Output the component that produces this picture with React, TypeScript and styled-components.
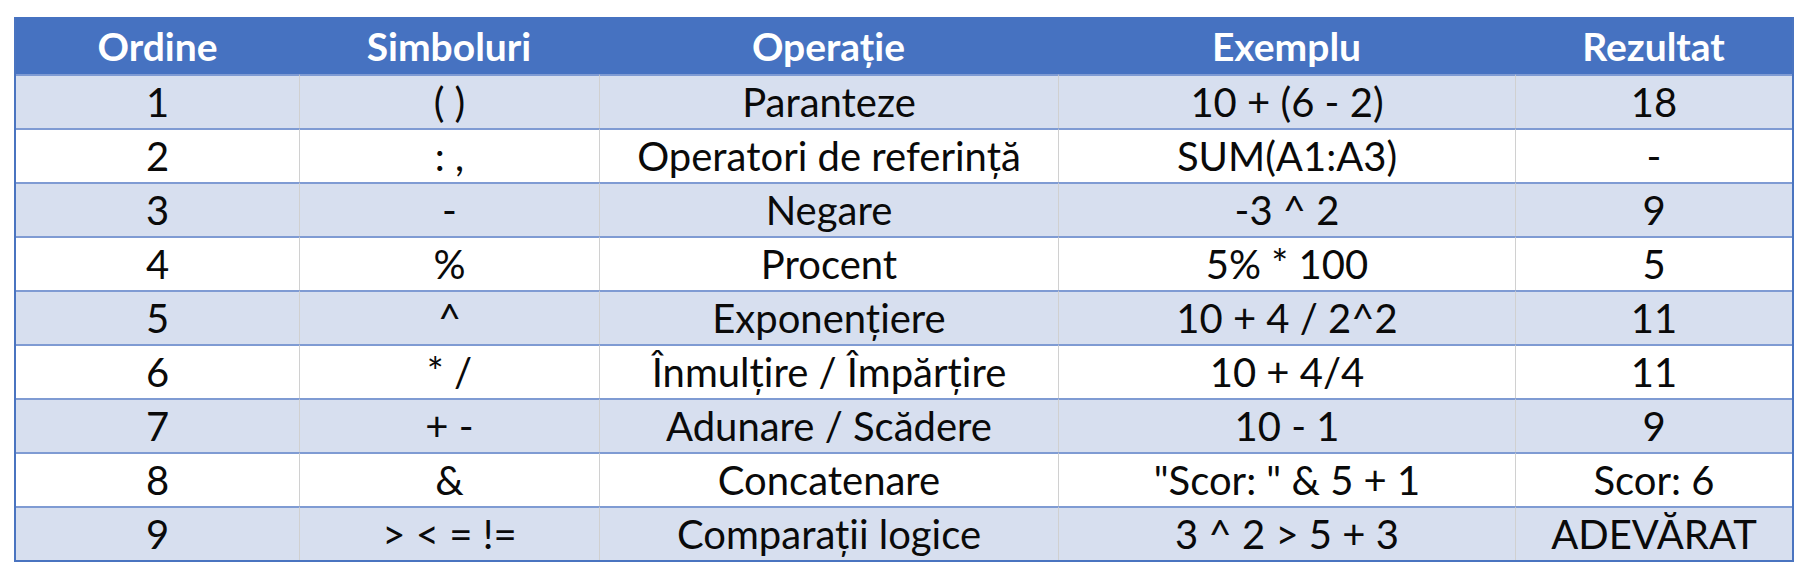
import React from "react";
import styled, { createGlobalStyle } from "styled-components";

const GlobalStyle = createGlobalStyle`
  html, body {
    margin: 0;
    padding: 0;
    background: #ffffff;
  }
  body {
    font-family: "Lato", "Open Sans", "Liberation Sans", sans-serif;
  }
`;

const Page = styled.div`
  padding: 17px 0 0 14px;
`;

const Table = styled.table`
  width: 1776px;
  border-collapse: separate;
  border-spacing: 0;
  table-layout: fixed;
  border-left: 2px solid #4a74c0;
  border-right: 2px solid #4a74c0;
  border-bottom: 2px solid #4a74c0;
`;

const HeadCell = styled.th`
  height: 57px;
  padding: 0;
  background: #4672c1;
  color: #ffffff;
  font-size: 39px;
  font-weight: 700;
  text-align: center;
  vertical-align: middle;
  white-space: nowrap;
`;

const Row = styled.tr<{ $shaded: boolean }>`
  background: ${(p) => (p.$shaded ? "#d7dfef" : "#ffffff")};
`;

const Cell = styled.td<{ $shaded: boolean }>`
  height: 52px;
  padding: 0;
  color: #0a0a0a;
  font-size: 40px;
  text-align: center;
  vertical-align: middle;
  white-space: nowrap;
  border-top: 2px solid #7f9bd3;
  & + & {
    border-left: 1px solid ${(p) => (p.$shaded ? "transparent" : "#d0d0d0")};
  }
`;

const columns = [
  { title: "Ordine", width: 283 },
  { title: "Simboluri", width: 300 },
  { title: "Operație", width: 459 },
  { title: "Exemplu", width: 457 },
  { title: "Rezultat", width: 277 },
];

const rows = [
  ["1", "( )", "Paranteze", "10 + (6 - 2)", "18"],
  ["2", ": ,", "Operatori de referință", "SUM(A1:A3)", "-"],
  ["3", "-", "Negare", "-3 ^ 2", "9"],
  ["4", "%", "Procent", "5% * 100", "5"],
  ["5", "^", "Exponențiere", "10 + 4 / 2^2", "11"],
  ["6", "* /", "Înmulțire / Împărțire", "10 + 4/4", "11"],
  ["7", "+ -", "Adunare / Scădere", "10 - 1", "9"],
  ["8", "&", "Concatenare", "\"Scor: \" & 5 + 1", "Scor: 6"],
  ["9", "> < = !=", "Comparații logice", "3 ^ 2 > 5 + 3", "ADEVĂRAT"],
];

export default function App() {
  return (
    <>
      <GlobalStyle />
      <Page>
        <Table>
          <colgroup>
            {columns.map((c) => (
              <col key={c.title} style={{ width: c.width }} />
            ))}
          </colgroup>
          <thead>
            <tr>
              {columns.map((c) => (
                <HeadCell key={c.title}>{c.title}</HeadCell>
              ))}
            </tr>
          </thead>
          <tbody>
            {rows.map((r, i) => {
              const shaded = i % 2 === 0;
              return (
                <Row key={r[0]} $shaded={shaded}>
                  {r.map((v, j) => (
                    <Cell key={j} $shaded={shaded}>
                      {v}
                    </Cell>
                  ))}
                </Row>
              );
            })}
          </tbody>
        </Table>
      </Page>
    </>
  );
}
